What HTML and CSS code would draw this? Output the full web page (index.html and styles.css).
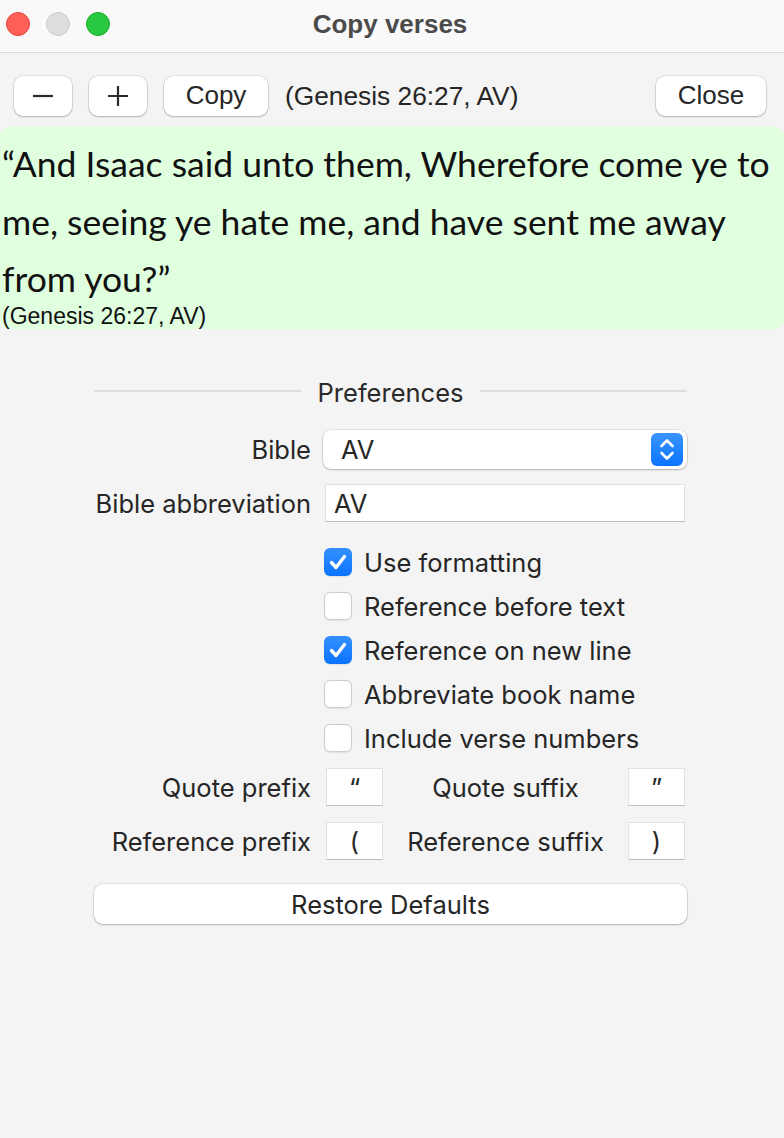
FILE: index.html
```html
<!DOCTYPE html>
<html lang="en">
<head>
<meta charset="utf-8">
<title>Copy verses</title>
<link rel="stylesheet" href="styles.css">
</head>
<body>
<div class="window">
  <header class="titlebar">
    <div class="lights">
      <span class="light red"></span>
      <span class="light grey"></span>
      <span class="light green"></span>
    </div>
    <div class="title">Copy verses</div>
    <div class="spacer"></div>
  </header>

  <div class="toolbar">
    <button class="btn btn-icon" type="button" aria-label="Smaller">
      <svg width="20" height="20" viewBox="0 0 20 20"><path d="M0 10H20" stroke="#2a2a2a" stroke-width="2.2" fill="none"/></svg>
    </button>
    <button class="btn btn-icon" type="button" aria-label="Larger">
      <svg width="20" height="20" viewBox="0 0 20 20"><path d="M0 10H20M10 0V20" stroke="#2a2a2a" stroke-width="2.2" fill="none"/></svg>
    </button>
    <button class="btn btn-copy" type="button">Copy</button>
    <span class="toolbar-ref">(Genesis 26:27, AV)</span>
    <button class="btn btn-close" type="button">Close</button>
  </div>

  <div class="verse">
    <p class="verse-text">“And Isaac said unto them, Wherefore come ye to me, seeing ye hate me, and have sent me away from you?”</p>
    <p class="verse-ref">(Genesis 26:27, AV)</p>
  </div>

  <section class="prefs">
    <div class="heading">
      <span class="rule"></span>
      <span class="heading-text">Preferences</span>
      <span class="rule"></span>
    </div>

    <div class="row row-bible">
      <span class="label">Bible</span>
      <div class="popup">
        <span class="popup-value">AV</span>
        <span class="stepper">
          <svg width="32" height="33" viewBox="0 0 32 33"><path d="M10.5 13L16 7.5L21.5 13M10.5 20L16 25.5L21.5 20" stroke="#fff" stroke-width="2.6" fill="none" stroke-linecap="round" stroke-linejoin="round"/></svg>
        </span>
      </div>
    </div>

    <div class="row row-abbr">
      <span class="label">Bible abbreviation</span>
      <div class="field field-wide">AV</div>
    </div>

    <div class="checks">
      <div class="check-row"><span class="box checked"><svg width="28" height="28" viewBox="0 0 28 28"><path d="M7.5 14.5L12 19.5L20.5 8.5" stroke="#fff" stroke-width="3.4" fill="none" stroke-linecap="round" stroke-linejoin="round"/></svg></span><span class="check-label">Use formatting</span></div>
      <div class="check-row"><span class="box"></span><span class="check-label">Reference before text</span></div>
      <div class="check-row"><span class="box checked"><svg width="28" height="28" viewBox="0 0 28 28"><path d="M7.5 14.5L12 19.5L20.5 8.5" stroke="#fff" stroke-width="3.4" fill="none" stroke-linecap="round" stroke-linejoin="round"/></svg></span><span class="check-label">Reference on new line</span></div>
      <div class="check-row"><span class="box"></span><span class="check-label">Abbreviate book name</span></div>
      <div class="check-row"><span class="box"></span><span class="check-label">Include verse numbers</span></div>
    </div>

    <div class="row row-pair row-quote">
      <span class="label">Quote prefix</span>
      <div class="field field-small">“</div>
      <span class="mid-label">Quote suffix</span>
      <div class="field field-small">”</div>
    </div>

    <div class="row row-pair row-ref">
      <span class="label">Reference prefix</span>
      <div class="field field-small">(</div>
      <span class="mid-label">Reference suffix</span>
      <div class="field field-small">)</div>
    </div>

    <button class="btn btn-restore" type="button">Restore Defaults</button>
  </section>
</div>
</body>
</html>
```

FILE: styles.css
```css
* { box-sizing: border-box; }

html, body {
  margin: 0;
  padding: 0;
}

body {
  background: #f4f4f4;
  width: 784px;
  height: 1138px;
  overflow: hidden;
  font-family: "Liberation Sans", Arial, sans-serif;
  color: #262626;
}

.window {
  width: 784px;
  height: 1138px;
}

/* Title bar */
.titlebar {
  height: 53px;
  background: #f9f9f9;
  border-bottom: 1px solid #d8d8d8;
  display: grid;
  grid-template-columns: 1fr auto 1fr;
  align-items: center;
}

.lights {
  display: flex;
  gap: 16px;
  padding-left: 6px;
  padding-bottom: 5px;
}

.light {
  width: 24px;
  height: 24px;
  border-radius: 50%;
  display: block;
}

.red { background: #fe5f57; border: 1px solid #e2463f; }
.grey { background: #dedede; border: 1px solid #cbcbcb; }
.green { background: #28c840; border: 1px solid #1eab30; }

.title {
  font-weight: bold;
  font-size: 26px;
  color: #4b4b4b;
  padding-bottom: 3px;
  padding-right: 4px;
}

/* Toolbar */
.toolbar {
  display: flex;
  align-items: center;
  padding: 23px 18px 0 14px;
}

.btn {
  font-family: "Liberation Sans", Arial, sans-serif;
  font-size: 26px;
  color: #262626;
  background: #ffffff;
  border: none;
  border-radius: 9px;
  height: 40px;
  padding: 0;
  box-shadow: 0 0 0 0.6px rgba(0, 0, 0, 0.14), 0 1px 2px rgba(0, 0, 0, 0.22);
  display: flex;
  align-items: center;
  justify-content: center;
}

.btn-icon {
  width: 58px;
  margin-right: 17px;
}

.btn-copy {
  width: 104px;
  margin-right: 17px;
  padding-bottom: 1px;
}

.toolbar-ref {
  font-size: 26.3px;
  color: #262626;
}

.btn-close {
  width: 110px;
  margin-left: auto;
  padding-bottom: 1px;
}

/* Verse box */
.verse {
  margin-top: 11px;
  height: 202px;
  background: #dfffdf;
  border-radius: 10px;
  padding: 8px 0 0 2px;
}

.verse-text {
  margin: 0;
  font-family: Lato, "Open Sans", sans-serif;
  font-size: 35.5px;
  line-height: 57.5px;
  color: #111;
}

.verse-ref {
  margin: -4px 0 0;
  font-size: 23px;
  line-height: 24px;
  color: #111;
}

/* Preferences */
.prefs {
  margin-left: 94px;
  width: 593px;
  font-family: Inter, "Liberation Sans", sans-serif;
  font-size: 25.5px;
}

.heading {
  display: flex;
  align-items: center;
  height: 30px;
  margin-top: 47px;
}

.rule {
  flex: 1;
  height: 2px;
  background: #dedede;
}

.heading-text {
  padding: 3px 17px 0;
  color: #2a2a2a;
}

.row {
  display: flex;
  align-items: center;
}

.label {
  width: 217px;
  flex: none;
  text-align: right;
  white-space: nowrap;
}

.row-bible { margin-top: 24px; }
.row-abbr { margin-top: 15px; }

.popup {
  margin-left: 12px;
  width: 364px;
  height: 39px;
  background: #fff;
  border-radius: 8px;
  box-shadow: 0 0 0 0.6px rgba(0, 0, 0, 0.14), 0 1px 2px rgba(0, 0, 0, 0.22);
  display: flex;
  align-items: center;
  padding: 0 4px 0 18px;
}

.popup-value {
  flex: 1;
}

.stepper {
  width: 32px;
  height: 33px;
  border-radius: 6px;
  background: linear-gradient(#3a95ff, #0a74ff);
  display: block;
}

.stepper svg { display: block; }

.field {
  background: #fff;
  border: 1px solid #e2e2e2;
  border-bottom: 1.5px solid #bdbdbd;
  height: 38px;
  display: flex;
  align-items: center;
}

.field-wide {
  margin-left: 14px;
  width: 360px;
  padding-left: 8px;
}

.field-small {
  width: 57px;
  justify-content: center;
}

.row-pair .label + .field { margin-left: 15px; }
.row-pair .mid-label + .field { margin-right: 2px; }

.mid-label {
  flex: 1;
  text-align: center;
  white-space: nowrap;
}

/* checkboxes */
.checks {
  margin-top: 18px;
  margin-left: 230px;
}

.check-row {
  height: 44px;
  display: flex;
  align-items: center;
}

.box {
  width: 28px;
  height: 28px;
  border-radius: 6px;
  background: #fff;
  border: 1px solid #cdcdcd;
  box-shadow: 0 0.5px 1px rgba(0, 0, 0, 0.08);
  flex: none;
  display: block;
}

.box.checked {
  border: none;
  background: linear-gradient(#3590ff, #0a74ff);
}

.box svg { display: block; }

.check-label {
  margin-left: 12px;
}

.row-quote { margin-top: 8px; }
.row-ref { margin-top: 16px; }

.btn-restore {
  margin-top: 24px;
  width: 593px;
  font-family: Inter, "Liberation Sans", sans-serif;
  font-size: 25.5px;
}
```
